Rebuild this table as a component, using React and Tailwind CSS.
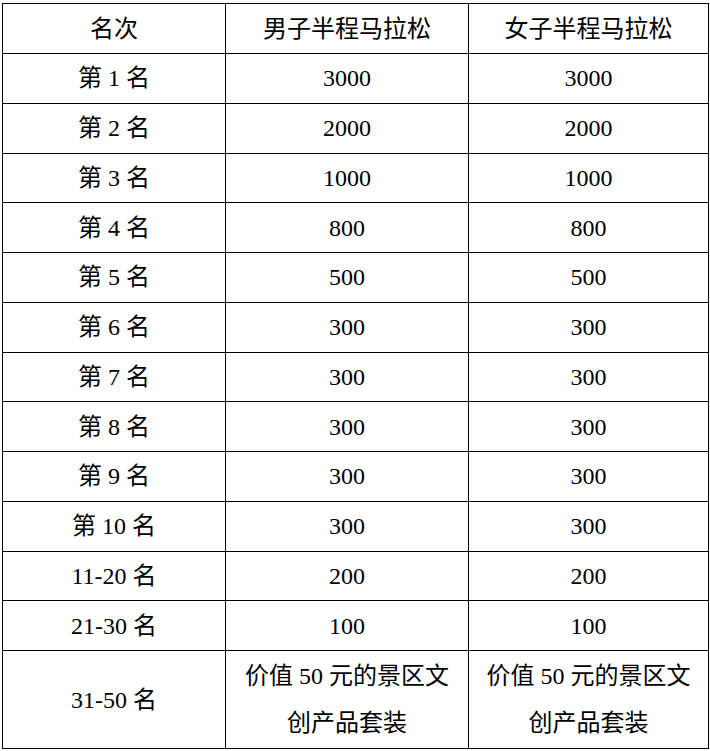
// 半程马拉松奖金表
const rows = [
  ["第 1 名", "3000", "3000"],
  ["第 2 名", "2000", "2000"],
  ["第 3 名", "1000", "1000"],
  ["第 4 名", "800", "800"],
  ["第 5 名", "500", "500"],
  ["第 6 名", "300", "300"],
  ["第 7 名", "300", "300"],
  ["第 8 名", "300", "300"],
  ["第 9 名", "300", "300"],
  ["第 10 名", "300", "300"],
  ["11-20 名", "200", "200"],
  ["21-30 名", "100", "100"],
];

const cell = "border border-black text-center align-middle p-0";

export default function App() {
  return (
    <div
      className="bg-white w-[710px] h-[751px] pt-[3px] pl-[2px] text-black text-[24px] leading-none"
      style={{ fontFamily: '"Liberation Serif", "Noto Sans CJK SC", serif' }}
    >
      <table className="border-collapse table-fixed w-[706px]">
        <colgroup>
          <col className="w-[223px]" />
          <col className="w-[243px]" />
          <col className="w-[240px]" />
        </colgroup>
        <thead>
          <tr className="h-[50px]">
            <th className={cell + " font-normal"}>名次</th>
            <th className={cell + " font-normal"}>男子半程马拉松</th>
            <th className={cell + " font-normal"}>女子半程马拉松</th>
          </tr>
        </thead>
        <tbody>
          {rows.map((r) => (
            <tr key={r[0]} className="h-[49.75px]">
              <td className={cell}>{r[0]}</td>
              <td className={cell}>{r[1]}</td>
              <td className={cell}>{r[2]}</td>
            </tr>
          ))}
          <tr className="h-[98px]">
            <td className={cell}>31-50 名</td>
            <td className={cell + " leading-[47px]"}>
              价值 50 元的景区文
              <br />
              创产品套装
            </td>
            <td className={cell + " leading-[47px]"}>
              价值 50 元的景区文
              <br />
              创产品套装
            </td>
          </tr>
        </tbody>
      </table>
    </div>
  );
}
